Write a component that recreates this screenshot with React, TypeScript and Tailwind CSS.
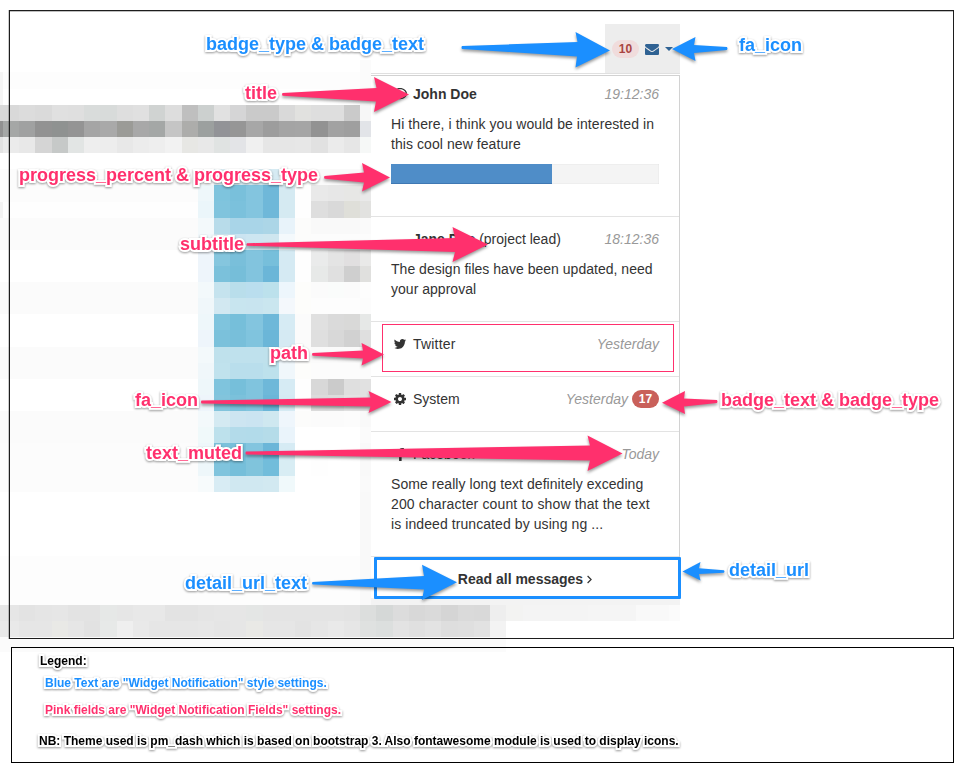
import React from "react";
import { FaFacebookF, FaRegComment } from "react-icons/fa";

const BLUE = "#1b8fff";
const PINK = "#ff306d";

/* ---------- pixelated backdrop ---------- */

const edges = [
  0, 3, 19, 35, 52, 68, 84, 100, 117, 133, 149, 165, 182, 198, 214, 230, 246, 263, 279, 295, 311, 328, 344, 360, 376,
  393, 409, 425, 441, 458, 474, 490, 506, 523, 539, 555, 571, 588, 604, 620, 636, 653, 669, 685,
];

type Strip = { y: number; h: number; from: number; colors: string };

const strips: Strip[] = [
  { y: 105, h: 16, from: 0, colors: "d9d9d9 d9d9d9 dcdcdc dadada e0e0e0 dfdfdf d9dcdb d8dbda dedede e0e0e0 d0d3d2 dddddd bfbfbf ccd0cf e1e1e1 d5d5d6 cacaca cacaca d9d9d9 e1e1df dedede dedede cacaca f7f7f7" },
  { y: 121, h: 16, from: 0, colors: "919191 a5a7a6 a0a1a1 929292 8f9291 949494 a5a5a5 a9a9a9 9b9b97 a8a8a8 a4a7a6 c5c5c5 adadab 9ca09f 929397 969696 a7a7a7 9d9d9d a4a4a4 a5a5a5 929292 a2a2a2 9f9f9f e2e4e8" },
  { y: 137, h: 16, from: 0, colors: "e2e2e2 ebebeb e8e8e8 d5d5d5 c6c9c8 e2e5e4 eeeeee ededed e8e8e8 ececec eeeeee f2f2f2 e7e7e4 e8e8e8 e0e3e2 e3e4e7 f0f0f0 e6e6e6 e6e6e6 e7e7e7 e1e1e1 ebebeb e6e6e6 f6f8f7" },
  { y: 169, h: 16, from: 13, colors: "fafcfd dceef5 d6ebf3 d6ebf3 d6ebf3 f0f8fa fdfdfd fafafa fafafa fafafa fafafa" },
  { y: 185, h: 16, from: 13, colors: "eef7fa 7ec4dd 79c0db 83c5df 6fb8d9 d5eaf2 fefefe e9e9e9 e7e7e7 e7e7e5 e9e9e9" },
  { y: 201, h: 17, from: 13, colors: "ebf6fa 80c4dd 7bc1dc 83c5df 6fb8d9 d5eaf2 fefefe dedede d9d9d9 dfdfd9 e2e2e0" },
  { y: 218, h: 16, from: 13, colors: "f3f9fb b8dcea a9d5e8 a9d5e8 acd6e7 e8f3fa fcfcfb f9f9f9 f9f9f9 f9f9f9 fafafa" },
  { y: 234, h: 16, from: 13, colors: "f0f7fa cfe7f0 cbe4f1 cde6f1 cfe6ef f4f9fc fcfcfb fcfcfc fcfcfc fcfcfc fcfcfc" },
  { y: 250, h: 16, from: 13, colors: "eef5fb 85c6de 79bfda 82c4de 77bfdb d5eaf3 fefefe eaebeb e4e4e4 e1dfe0 e9e9e8" },
  { y: 266, h: 16, from: 13, colors: "eef5fb 7bc1db 76bed9 82c4de 6bb6d8 d5eaf3 fefefe e7e9e8 e0e0e0 cfcfcf e0e0de" },
  { y: 282, h: 16, from: 13, colors: "f3f9fb c5e3ee b9deeb badeee bce1ec edf6fc fdfdfb fbfbfb fafcfb fbfbfb fdfdfd" },
  { y: 298, h: 16, from: 13, colors: "f0f7fa d2e8f1 c8e5ef c8e4ef cae6ef f4f8fc fdfdfb fdfdfd fdfdfd fdfdfd fcfcfc" },
  { y: 314, h: 16, from: 13, colors: "eef7fa 7fc4dd 76bfda 83c5df 6eb8d9 d6ebf4 fbfbfb e0e0e0 dadada d9d9d8 e6e8e7" },
  { y: 330, h: 17, from: 13, colors: "eef5fb 7bc1db 78bfda 80c4de 6bb6d8 d5eaf3 fbfbfb dfdfdf d8d8d8 d1d1d1 dfdfdf" },
  { y: 347, h: 16, from: 13, colors: "f3f9fb bfe1ec bfe1ed bfe1ed bfe1ec eef6fb fcfcfb fafafa fafafa fafafa fcfcfc" },
  { y: 363, h: 16, from: 13, colors: "f0f7fa c0e2ed b9deec b9deec bde1ec f0f7fb fdfdfb fcfcfc fcfcfc fcfcfc fcfcfc" },
  { y: 379, h: 16, from: 13, colors: "eef7fa 7fc4dd 76bfda 80c4de 6eb8d9 d6ebf4 fefefe d8d8d8 cbcbcb dfdfdf e1e1e1" },
  { y: 395, h: 16, from: 13, colors: "eef5fb 82c4dc 7bc1db 80c4de 6bb6d8 d5eaf3 fefefe dcdcdc dcdddd e3e3e3 e2e2e2" },
  { y: 411, h: 16, from: 13, colors: "f3f9fb d4eaf2 cde5f1 cbe4f1 cfe8f0 eff6fc fcfcfb fbfbfb fbfbfb fcfcfc f9f9f9" },
  { y: 427, h: 16, from: 13, colors: "f0f9fa bde1ec b3dbea b2dbea b5dce9 eaf4fb ffffff ffffff ffffff ffffff fbfbfb" },
  { y: 443, h: 16, from: 13, colors: "eef7fa 7bc1db 76bfda 83c5df 6bb6d8 d6ebf4 ffffff ffffff ffffff ffffff f9f9f9" },
  { y: 459, h: 17, from: 13, colors: "eef7fa 80c4dd 76bfda 80c4dc 72bddb d8edf4 ffffff fefefe ffffff ffffff f9f9f9" },
  { y: 476, h: 16, from: 13, colors: "f7fbfc d8ecf4 d0e8f1 d0e8f1 d2e9f1 f0f9fb ffffff ffffff ffffff ffffff fafafa" },
  { y: 605, h: 16, from: 0, colors: "e6e6e6 e6e6e6 e3e3e3 e5e5e5 e6e6e6 e3e3e3 e3e3e3 e6e8e7 e6e6e6 e8e8e8 e8e8e8 e3e3e3 e3e3e3 e5e5e5 e6e6e6 e6e6e6 e4e6e5 e4e4e4 e4e4e4 e4e4e4 e4e4e4 e4e4e4 e3e3e3 dcdedd d5d8d7 dcdcdc d8d8d8 dadada d5d5d5 dadada d9d9d9 eeeeee f3f3f2 f4f4f4 f4f4f4 f4f4f4 f4f4f4 f5f5f5 f5f5f5 f5f5f5 f9f9f9 f9f9f9 fbfbfb" },
  { y: 621, h: 16, from: 0, colors: "e9e9e9 e9e9e9 e6e6e6 e6e6e6 e9e9e6 e6e6e6 e2e2e2 e7e9e8 efefef e9e9e9 e6e6e6 e6e6e6 e6e6e6 e7e7e7 e5e5e5 e6e6e6 e9e9e6 e6e6e6 e6e6e6 e3e3e3 e6e6e6 e9e9e9 e6e6e6 dfe1e0 dcdfde e3e3e3 e0e0e0 e3e3e3 dedede dfdfdf e2e2e2 f3f3f3" },
];

const washes = [
  [0, 72, 371, 17, "#fdfdfd"],
  [360, 60, 11, 90, "#fbfbfb"],
  [0, 169, 198, 33, "#fcfcfc"],
  [0, 202, 198, 16, "#fefefe"],
  [0, 218, 198, 32, "#fbfbfb"],
  [0, 282, 198, 32, "#fbfbfb"],
  [0, 347, 198, 32, "#fbfbfb"],
  [0, 411, 198, 32, "#fbfbfb"],
  [0, 443, 198, 49, "#fcfcfc"],
  [360, 492, 11, 113, "#f9f9f9"],
  [0, 556, 360, 49, "#fdfdfd"],
  [371, 598, 309, 7, "#f3f3f3"],
  [0, 637, 506, 15, "#fbfbfb"],
  [0, 72, 3, 33, "#f5f5f5"],
  [0, 202, 3, 16, "#f3f3f3"],
] as const;

function Mosaic() {
  return (
    <svg className="absolute left-0 top-0" width="961" height="770" shapeRendering="crispEdges" aria-hidden="true">
      {washes.map(([x, y, w, h, fill], i) => (
        <rect key={i} x={x} y={y} width={w} height={h} fill={fill} />
      ))}
      {strips.map((s) =>
        s.colors.split(" ").map((c, i) => {
          const x = edges[s.from + i];
          const end = Math.min(edges[s.from + i + 1], s.y < 600 ? 371 : 680);
          return end > x ? (
            <rect key={`${s.y}-${i}`} x={x} y={s.y} width={end - x} height={s.h} fill={`#${c}`} />
          ) : null;
        })
      )}
    </svg>
  );
}

/* ---------- annotations ---------- */

const arrows = [
  { c: BLUE, d: "M462 46 Q461 47.500 462 49 L577 56.500 L575.500 67.500 L610 50.500 L575.500 32 L577.500 42 Z" },
  { c: BLUE, d: "M727 47 Q728 48.500 727 50 L694 53 L695.500 61 L672 49 L695.500 37 L694 45 Z" },
  { c: BLUE, d: "M724 570.300 Q725 571.500 724 572.700 L699 574 L700.500 580.500 L682.500 571.500 L700.500 562 L699 568.300 Z" },
  { c: BLUE, d: "M312.500 582 Q311.500 583.300 312.500 584.600 L424 589.500 L422 600 L457 582.300 L422 564.800 L424 576 Z" },
  { c: PINK, d: "M282.500 93 Q281.500 94.300 282.500 95.700 L376 101.500 L374 112 L409 94.500 L374 77 L376.500 88 Z" },
  { c: PINK, d: "M324.500 176 Q323.500 177.300 324.500 178.700 L364 182.500 L362 191.500 L390 177.500 L362 163 L364 172.500 Z" },
  { c: PINK, d: "M247 243.200 Q246 244.500 247 245.800 L455 252 L452.500 262 L488 244.500 L452.500 227 L455 238 Z" },
  { c: PINK, d: "M312.500 353 Q311.500 354.300 312.500 355.700 L363 358.500 L361.500 365.500 L384 354.500 L361.500 343 L363 350.500 Z" },
  { c: PINK, d: "M201.500 400.600 Q200.500 402 201.500 403.400 L370.500 406.500 L368.500 413 L391.500 402 L368.500 391 L370.500 397.500 Z" },
  { c: PINK, d: "M246 451.500 Q245 453 246 454.400 L590 460.500 L587.500 471 L622.500 453.500 L587.500 435.500 L590 445.500 Z" },
  { c: PINK, d: "M717 400 Q718 401.500 717 403 L684 406.500 L685 414 L662 402.800 L685 391 L684 398.500 Z" },
];

function Arrows() {
  return (
    <svg
      className="absolute left-0 top-0 [filter:drop-shadow(0_2px_1.5px_rgba(0,0,0,0.4))]"
      width="961"
      height="770"
      aria-hidden="true"
    >
      {arrows.map((a) => (
        <path key={a.d} d={a.d} fill={a.c} />
      ))}
    </svg>
  );
}

const halo =
  "[-webkit-text-stroke:4px_#fff] [paint-order:stroke_fill] [stroke-linejoin:round] [filter:drop-shadow(0_1.5px_1px_rgba(0,0,0,0.4))]";

function Label({ at, tone, children }: { at: string; tone: "blue" | "pink"; children: React.ReactNode }) {
  return (
    <span
      className={`absolute whitespace-nowrap text-[18px] font-bold leading-5 ${halo} ${at} ${
        tone === "blue" ? "text-[#1b8fff]" : "text-[#ff306d]"
      }`}
    >
      {children}
    </span>
  );
}

/* ---------- icons ---------- */

function Glyph({ d, size, className = "" }: { d: string; size: number; className?: string }) {
  return (
    <svg className={className} width={size} height={size} viewBox="0 0 1792 1792" fill="currentColor" aria-hidden="true">
      <path d={d} />
    </svg>
  );
}

const ENVELOPE =
  "M1792 710v794q0 66-47 113t-113 47h-1472q-66 0-113-47t-47-113v-794q44 49 101 87 362 246 497 345 57 42 92.5 65.5t94.5 48 110 24.5h2q51 0 110-24.5t94.5-48 92.5-65.5q170-123 498-345 57-39 100-87zm0-294q0 79-49 151t-122 123q-376 261-468 325-10 7-42.5 31t-54 38.5-52 32.5-57.5 27-50 9h-2q-23 0-50-9t-57.5-27-52-32.5-54-38.5-42.5-31q-91-64-262-182.5t-205-142.5q-62-42-117-115.5t-55-136.5q0-78 41.5-130t118.5-52h1472q65 0 112.5 47t47.5 113z";
const TWITTER =
  "M1684 408q-67 98-162 167 1 14 1 42 0 130-38 259.5t-115.5 248.5-184.5 210.5-258 146-323 54.5q-271 0-496-145 35 4 78 4 225 0 401-138-105-2-188-64.500t-114-159.500q33 5 61 5 43 0 85-11-112-23-185.500-111.500t-73.500-205.500v-4q68 38 146 41-66-44-105-115t-39-154q0-88 44-163 121 149 294.500 238.500t371.500 99.500q-8-38-8-74 0-134 94.500-228.500t228.500-94.500q140 0 236 102 109-21 205-78-37 115-142 178 93-10 186-50z";
const COG =
  "M1152 896q0-106-75-181t-181-75-181 75-75 181 75 181 181 75 181-75 75-181zm512-109v222q0 12-8 23t-20 13l-185 28q-19 54-39 91 35 50 107 138 10 12 10 25t-9 23q-27 37-99 108t-94 71q-12 0-26-9l-138-108q-44 23-91 38-16 136-29 186-7 28-36 28h-222q-14 0-24.5-8.5t-11.5-21.5l-28-184q-49-16-90-37l-141 107q-10 9-25 9-14 0-25-11-126-114-165-168-7-10-7-23 0-12 8-23 15-21 51-66.5t54-70.5q-27-50-41-99l-183-27q-13-2-21-12.5t-8-23.5v-222q0-12 8-23t19-13l186-28q14-46 39-92-40-57-107-138-10-12-10-24 0-10 9-23 26-36 98.5-107.5t94.5-71.5q13 0 26 10l138 107q44-23 91-38 16-136 29-186 7-28 36-28h222q14 0 24.5 8.5t11.5 21.5l28 184q49 16 90 37l142-107q9-9 24-9 13 0 25 10 129 119 165 170 7 8 7 22 0 12-8 23-15 21-51 66.5t-54 70.5q26 50 41 98l183 28q13 2 21 12.5t8 23.5z";

/* ---------- dropdown ---------- */

function Heading({
  icon,
  title,
  time,
  badge,
}: {
  icon?: React.ReactNode;
  title: React.ReactNode;
  time: string;
  badge?: string;
}) {
  return (
    <div className="flex h-5 items-center">
      <span className="flex w-[18px] shrink-0 justify-center">{icon}</span>
      <span className="ml-1 flex-1">{title}</span>
      <em className="text-[#999]">{time}</em>
      {badge && (
        <span className="ml-1 flex h-[18px] w-[27px] items-center justify-center rounded-full bg-[#c9605a] text-xs font-bold text-white">
          {badge}
        </span>
      )}
    </div>
  );
}

function Dropdown() {
  return (
    <div className="h-[523px] w-[309px] border-r border-t border-[#d2d2d2] bg-white text-sm leading-5 text-[#333]">
      <div className="h-[140px] px-5 pt-2">
        <Heading icon={<FaRegComment size={14} />} title={<b>John Doe</b>} time="19:12:36" />
        <p className="mt-2.5 whitespace-nowrap tracking-[0.07px]">
          Hi there, i think you would be interested in
          <br />
          this cool new feature
        </p>
        <div className="mt-2.5 h-5 bg-[#f4f4f4] shadow-[inset_0_0_1px_rgba(0,0,0,0.25)]">
          <div className="h-5 w-3/5 bg-[#4f8dc8] shadow-[inset_0_-1px_0_#3f78b3]" />
        </div>
      </div>
      <div className="h-[105px] border-t border-[#e3e3e3] px-5 pt-3">
        <Heading
          title={
            <>
              <b>Jane Doe</b> (project lead)
            </>
          }
          time="18:12:36"
        />
        <p className="mt-2.5 whitespace-nowrap tracking-[0.02px]">
          The design files have been updated, need
          <br />
          your approval
        </p>
      </div>
      <div className="h-[55px] border-t border-[#e3e3e3] px-5 pt-3">
        <Heading
          icon={<Glyph d={TWITTER} size={14} />}
          title={<span className="tracking-[0.2px]">Twitter</span>}
          time="Yesterday"
        />
      </div>
      <div className="h-[55px] border-t border-[#e3e3e3] px-5 pt-3">
        <Heading icon={<Glyph d={COG} size={14} />} title="System" time="Yesterday" badge="17" />
      </div>
      <div className="h-[125px] border-t border-[#e3e3e3] px-5 pt-3">
        <Heading
          icon={<FaFacebookF size={13} />}
          title="Facebook"
          time="Today"
        />
        <p className="mt-2.5 whitespace-nowrap">
          <span className="tracking-[0.06px]">Some really long text definitely exceding</span>
          <br />
          <span className="tracking-[0.14px]">200 character count to show that the text</span>
          <br />
          <span className="tracking-[0.08px]">is indeed truncated by using ng ...</span>
        </p>
      </div>
      <div className="flex items-center justify-center border-t border-[#e3e3e3] pt-3">
        <b>Read all messages</b>
        <svg className="ml-1" width="5" height="9" viewBox="0 0 5 9" fill="none" stroke="currentColor" strokeWidth="1.2">
          <path d="M0.600 1 L4.100 4.500 L0.600 8" />
        </svg>
      </div>
    </div>
  );
}

export default function App() {
  return (
    <div className="relative h-[770px] w-[961px] overflow-hidden bg-white font-['Liberation_Sans',Arial,sans-serif]">
      <Mosaic />
      <div className="relative pl-[9px] pt-[10px]">
        <section className="h-[629px] w-[945px] border border-[#1d1d1d] shadow-[inset_0_1px_0_rgba(0,0,0,0.25),-1px_0_0_rgba(0,0,0,0.2)]">
          <div className="ml-[361px] flex w-[309px] flex-col pt-[13px]">
            <div className="flex h-[49px] w-[75px] items-center self-end bg-[#ededed] pl-[7px] text-[#2f6293]">
              <span className="flex h-[18px] w-[27px] items-center justify-center rounded-full bg-[#f0dcdc] text-xs font-bold text-[#a94442]">
                10
              </span>
              <Glyph d={ENVELOPE} size={14} className="ml-[6px]" />
              <span className="ml-[6px] border-x-4 border-t-4 border-x-transparent border-t-[#2f6293]" />
            </div>
            <div className="h-0.5 border-t border-[#e0e0e0] bg-white" />
            <Dropdown />
          </div>
        </section>
        <section className="ml-[2px] mt-2 h-[116px] w-[943px] border border-black pl-7 pt-[5px] text-xs font-bold leading-4 text-black">
          <div className={halo}>
            <p>Legend:</p>
            <p className="ml-[5px] mt-[6px] text-[#1b8fff]">Blue Text are "Widget Notification" style settings.</p>
            <p className="ml-[5px] mt-[11px] text-[#ff306d]">Pink fields are "Widget Notification Fields" settings.</p>
            <p className="-ml-px mt-[15px]">
              NB: Theme used is pm_dash which is based on bootstrap 3. Also fontawesome module is used to display icons.
            </p>
          </div>
        </section>
      </div>

      <div className="absolute left-[382px] top-[324px] h-[48px] w-[292px] border border-[#ff306d]" />
      <div className="absolute left-[374px] top-[557px] h-[42px] w-[307px] rounded-[1px] border-[3px] border-[#1b8fff]" />
      <Arrows />
      <Label tone="blue" at="left-[206px] top-[34px]">badge_type &amp; badge_text</Label>
      <Label tone="blue" at="left-[739px] top-[35px]">fa_icon</Label>
      <Label tone="pink" at="left-[245px] top-[83px]">title</Label>
      <Label tone="pink" at="left-[19px] top-[165px]">progress_percent &amp; progress_type</Label>
      <Label tone="pink" at="left-[180px] top-[234px]">subtitle</Label>
      <Label tone="pink" at="left-[270px] top-[343px]">path</Label>
      <Label tone="pink" at="left-[135px] top-[390px]">fa_icon</Label>
      <Label tone="pink" at="left-[146px] top-[443px]">text_muted</Label>
      <Label tone="pink" at="left-[721px] top-[390px]">badge_text &amp; badge_type</Label>
      <Label tone="blue" at="left-[729px] top-[560px]">detail_url</Label>
      <Label tone="blue" at="left-[185px] top-[573px]">detail_url_text</Label>
    </div>
  );
}
